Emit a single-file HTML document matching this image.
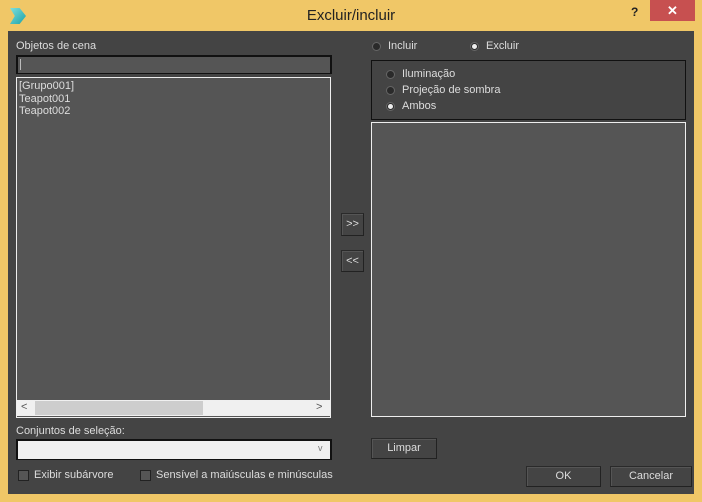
<!DOCTYPE html>
<html><head><style>
body{margin:0;width:702px;height:502px;overflow:hidden;font-family:"Liberation Sans",sans-serif;}
#f{position:absolute;left:0;top:0;width:702px;height:502px;background:#f0c767;}
#c{position:absolute;left:8px;top:31px;width:686px;height:463px;background:#444;}
.a{position:absolute;}
.t{position:absolute;font-size:11px;color:#ddd;white-space:nowrap;}
.rad{position:absolute;width:7px;height:7px;border-radius:50%;background:#2a2a2a;border:1px solid #666;}
.rad.on::after{content:"";position:absolute;left:1px;top:1px;width:5px;height:5px;border-radius:50%;background:#eee;}
.btn{position:absolute;background:#444;border:1px solid #2a2a2a;border-right-color:#222;border-bottom-color:#222;box-shadow:inset 1px 1px 0 #555;color:#ddd;font-size:11px;text-align:center;}
.cb{position:absolute;width:9px;height:9px;background:#555;border:1px solid #222;}
</style></head><body>
<div id="f"></div>
<div class="a" style="left:10px;top:8px;width:16px;height:16px;background:linear-gradient(135deg,#7fe0dc,#1aa1a8);clip-path:polygon(0 0,60% 0,100% 50%,60% 100%,0 100%,30% 50%)"></div>
<div class="t" style="left:0;width:702px;text-align:center;top:7px;font-size:15px;color:#222">Excluir/incluir</div>
<div class="t" style="left:631px;top:5px;font-size:12px;font-weight:bold;color:#222">?</div>
<div class="a" style="left:650px;top:0;width:45px;height:21px;background:#c75050;color:#fff;text-align:center;font-size:13px;line-height:21px;font-weight:bold">✕</div>
<div id="c"></div>
<div class="t" style="left:16px;top:40px">Objetos de cena</div>
<div class="a" style="left:16px;top:55px;width:312px;height:16px;background:#555;border:1px solid #111;border-width:2px 2px 1px 2px"></div>
<div class="a" style="left:20px;top:59px;width:1px;height:11px;background:#bbb"></div>
<div class="a" style="left:16px;top:77px;width:313px;height:339px;background:#555;border:1px solid #eee"></div>
<div class="t" style="left:19px;top:80px;line-height:12.5px">[Grupo001]<br>Teapot001<br>Teapot002</div>
<div class="a" style="left:17px;top:400px;width:313px;height:16px;background:#f0f0f0"></div>
<div class="a" style="left:35px;top:401px;width:168px;height:14px;background:#cdcdcd"></div>
<div class="t" style="left:21px;top:401px;color:#555;font-size:11px">&lt;</div>
<div class="t" style="left:316px;top:401px;color:#555;font-size:11px">&gt;</div>
<div class="t" style="left:16px;top:425px">Conjuntos de seleção:</div>
<div class="a" style="left:16px;top:439px;width:312px;height:18px;background:#f0f0f0;border:1px solid #111;border-width:2px 2px 1px 2px"></div>
<div class="t" style="left:318px;top:443px;color:#777;font-size:9px">v</div>
<div class="cb" style="left:18px;top:470px"></div><div class="t" style="left:34px;top:469px">Exibir subárvore</div>
<div class="cb" style="left:140px;top:470px"></div><div class="t" style="left:156px;top:469px">Sensível a maiúsculas e minúsculas</div>
<div class="btn" style="left:341px;top:213px;width:21px;height:21px;line-height:21px">&gt;&gt;</div>
<div class="btn" style="left:341px;top:250px;width:21px;height:20px;line-height:20px">&lt;&lt;</div>
<div class="a" style="left:371px;top:0;width:0"></div>
<div class="rad" style="left:372px;top:42px"></div><div class="t" style="left:388px;top:40px">Incluir</div>
<div class="rad on" style="left:470px;top:42px"></div><div class="t" style="left:486px;top:40px">Excluir</div>
<div class="a" style="left:371px;top:60px;width:313px;height:58px;border:1px solid #111"></div>
<div class="rad" style="left:386px;top:70px"></div><div class="t" style="left:402px;top:68px">Iluminação</div>
<div class="rad" style="left:386px;top:86px"></div><div class="t" style="left:402px;top:84px">Projeção de sombra</div>
<div class="rad on" style="left:386px;top:102px"></div><div class="t" style="left:402px;top:100px">Ambos</div>
<div class="a" style="left:371px;top:122px;width:313px;height:293px;background:#555;border:1px solid #eee"></div>
<div class="btn" style="left:371px;top:438px;width:64px;height:19px;line-height:19px">Limpar</div>
<div class="btn" style="left:526px;top:466px;width:73px;height:19px;line-height:19px">OK</div>
<div class="btn" style="left:610px;top:466px;width:80px;height:19px;line-height:19px">Cancelar</div>
</body></html>
